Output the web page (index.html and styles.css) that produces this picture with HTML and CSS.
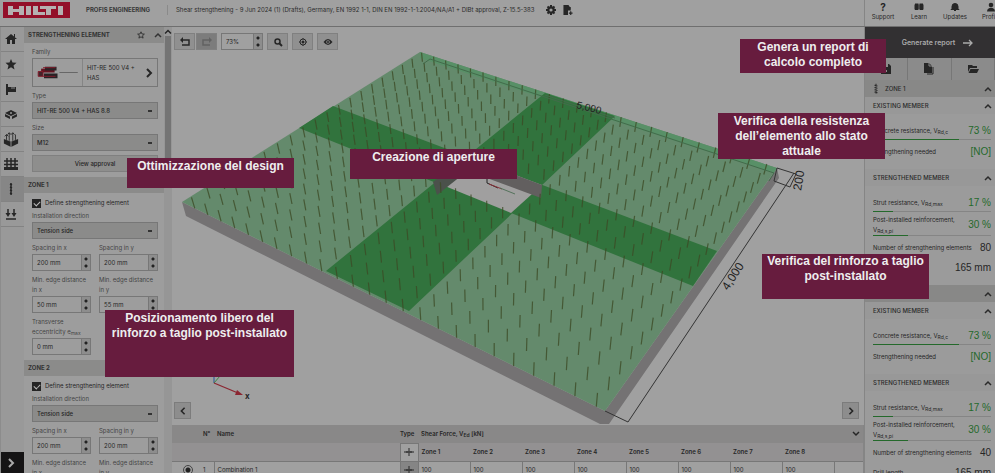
FILE: index.html
```html
<!DOCTYPE html>
<html lang="it">
<head>
<meta charset="utf-8">
<title>PROFIS Engineering</title>
<link rel="stylesheet" href="styles.css">
</head>
<body>
<svg class="defs" aria-hidden="true">
  <symbol id="up" viewBox="0 0 8 6"><path d="M1 5l3-3 3 3" fill="none" stroke="currentColor" stroke-width="1.5"/></symbol>
  <symbol id="right" viewBox="0 0 8 10"><path d="M2 1l4 4-4 4" fill="none" stroke="currentColor" stroke-width="2"/></symbol>
  <symbol id="rod" viewBox="0 0 8 14"><path d="M4 0v13M2 2l4 1M2 5l4 1M2 8l4 1M2 11l4 1" fill="none" stroke="currentColor" stroke-width="1.4"/></symbol>
  <symbol id="cross" viewBox="0 0 10 10"><path d="M0 5h10M5 1v8M3 4v2M7 4v2" fill="none" stroke="currentColor"/></symbol>
</svg>
<header class="top">
  <a class="logo" href="#" aria-label="Hilti"><svg viewBox="0 0 67 16"><g fill="#b5b0b1"><path d="M5 4h5v3h6V4h5v9h-5v-3h-6v3H5zM23 4h5v9h-5zM30 4h5v6h7v3H30zM37 4h16v3h-5v6h-5V7h-6zM55 4h5v9h-5z"/></g></svg></a>
  <span class="product">PROFIS ENGINEERING</span>
  <span class="project">Shear strengthening - 9 Jun 2024 (1) (Drafts), Germany, EN 1992 1-1, DIN EN 1992-1-1:2004/NA/A1 + DIBt approval, Z-15.5-383</span>
  <button class="plain" aria-label="Settings"><svg class="i10" viewBox="0 0 10 10"><circle cx="5" cy="5" r="2.7" fill="none" stroke="currentColor" stroke-width="2.2"/><path d="M5 0v2M5 8v2M0 5h2M8 5h2M1.500 1.500l1.300 1.300M7.200 7.200l1.300 1.300M8.500 1.500L7.200 2.800M2.800 7.200L1.500 8.500" stroke="currentColor" stroke-width="2"/></svg></button>
  <button class="plain" aria-label="Export"><svg class="i10" viewBox="0 0 10 11"><path d="M0 0h5l3 3v3H5v5H0z" fill="currentColor"/><path d="M5 0v3h3M6 9h4M8 7v4" stroke="currentColor" stroke-width="1.300" fill="none"/></svg></button>
  <nav class="links">
    <a href="#"><b class="q">?</b>Support</a>
    <a href="#"><svg viewBox="0 0 10 9"><path d="M1 1h3.500v6H1zM5.500 1H9v6H5.500z"/><path d="M1 2h3v5H1zM6 2h3v5H6z" stroke="currentColor"/></svg>Learn</a>
    <a href="#"><svg viewBox="0 0 10 9"><path d="M2 6V4a3 3 0 0 1 6 0v2l1 1H1zM4 8h2" fill="currentColor" stroke="currentColor"/></svg>Updates</a>
    <a href="#"><svg viewBox="0 0 10 9"><circle cx="5" cy="2.500" r="2.300"/><path d="M1 9c0-5 8-5 8 0z"/></svg>Profile</a>
  </nav>
</header>
<div class="app">
  <nav class="rail" aria-label="Sections">
    <button aria-label="Home"><svg viewBox="0 0 16 16"><path d="M8 3l6 5h-2v5H9V9H7v4H4V8H2z"/><path d="M11 3h1v3h-1z"/></svg></button>
    <button aria-label="Favourites"><svg viewBox="0 0 16 16"><path d="M8 3l1.500 3.500 4 .300-3 2.600 1 4L8 11.200 4.500 13.400l1-4-3-2.600 4-.300z"/></svg></button>
    <button aria-label="Loads"><svg viewBox="0 0 16 16"><path d="M3 3h2v11H3zM5 6h8v5H5z"/><path d="M9 6v2M11 6v2" stroke="#888" /></svg></button>
    <button aria-label="Material"><svg viewBox="0 0 16 16"><path d="M8 4l6 3-6 3-6-3zM2 8l5 2.500V13L2 10.500zM14 8L9 10.500V13l5-2.500z"/><circle cx="8" cy="7" r="1" fill="#999"/></svg></button>
    <button aria-label="Reinforcement"><svg viewBox="0 0 18 18"><path d="M1 9l8 3 8-3v5l-8 4-8-4z"/><path d="M4 10V4M7 11V2M11 11V2M14 10V4M2 6l2-2 2 2M9 4l2-2 2 2M5 4l2-2 2 2" fill="none" stroke="currentColor"/><path d="M9 12v6" stroke="#999"/></svg></button>
    <button aria-label="Mesh"><svg viewBox="0 0 16 16"><path d="M1 5h14M1 8.500h14M4 2v10M8 2v10M12 2v10" fill="none" stroke="currentColor" stroke-width="1.500"/><path d="M1 11h14v3H1z"/></svg></button>
    <button class="on" aria-label="Strengthening"><svg viewBox="0 0 16 16"><path d="M8 2v12M7 3l2 1M7 6l2 1M7 9l2 1M7 12l2 1" fill="none" stroke="currentColor" stroke-width="1.500"/></svg></button>
    <button aria-label="Actions"><svg viewBox="0 0 16 16"><path d="M5 3v6M11 3v6M3 13h10" fill="none" stroke="currentColor" stroke-width="1.500"/><path d="M2.500 7h5L5 11zM8.500 7h5L11 11z"/></svg></button>
    <button class="expand" aria-label="Expand"><svg viewBox="0 0 8 10"><use href="#right"/></svg></button>
  </nav>
  <aside class="side">
    <section>
      <h2>STRENGTHENING ELEMENT <span class="tools"><svg class="i8" viewBox="0 0 10 10"><path d="M5 1l1.200 2.700 3 .200-2.300 2 .700 3L5 7.300 2.400 8.900l.700-3-2.300-2 3-.200z" fill="none" stroke="currentColor" stroke-width="1.200"/></svg><svg class="i8"><use href="#up"/></svg></span></h2>
      <div class="fields">
        <div class="field"><span>Family</span>
          <button class="family"><svg class="pic" viewBox="0 0 50 28"><path d="M8 10h14v4H8z" fill="#651522"/><path d="M12 8h12v4H12zM11 15h14v5H11z" fill="#292326"/><path d="M5 13h5v5H5zM10 9h13M10 18h13" fill="#44242a" stroke="#841c2c"/><path d="M27 14h19" stroke="#656565"/></svg><span>HIT-RE 500 V4 +<br>HAS</span><svg class="i10"><use href="#right"/></svg></button>
        </div>
        <div class="field"><label for="type">Type</label><select id="type"><option>HIT-RE 500 V4 + HAS 8.8</option></select></div>
        <div class="field"><label for="size">Size</label><select id="size"><option>M12</option></select></div>
        <button class="approval">View approval</button>
      </div>
    </section>
    <section>
      <h2>ZONE 1</h2>
      <div class="fields zone">
        <label class="check"><input type="checkbox" checked>Define strengthening element</label>
        <div class="field"><label for="d1">Installation direction</label><select id="d1"><option>Tension side</option></select></div>
        <div class="field half"><label for="x1">Spacing in x</label><div class="num"><input id="x1" value="200 mm"><i></i></div></div>
        <div class="field half"><label for="y1">Spacing in y</label><div class="num"><input id="y1" value="200 mm"><i></i></div></div>
        <div class="field half"><label for="ex1">Min. edge distance<br>in x</label><div class="num"><input id="ex1" value="50 mm"><i></i></div></div>
        <div class="field half"><label for="ey1">Min. edge distance<br>in y</label><div class="num"><input id="ey1" value="55 mm"><i></i></div></div>
        <div class="field half"><label for="t1">Transverse<br>eccentricity e<sub>max</sub></label><div class="num"><input id="t1" value="0 mm"><i></i></div></div>
      </div>
    </section>
    <section>
      <h2>ZONE 2</h2>
      <div class="fields zone">
        <label class="check"><input type="checkbox" checked>Define strengthening element</label>
        <div class="field"><label for="d2">Installation direction</label><select id="d2"><option>Tension side</option></select></div>
        <div class="field half"><label for="x2">Spacing in x</label><div class="num"><input id="x2" value="200 mm"><i></i></div></div>
        <div class="field half"><label for="y2">Spacing in y</label><div class="num"><input id="y2" value="200 mm"><i></i></div></div>
        <div class="field half"><label for="ex2">Min. edge distance<br>in x</label><div class="num"><input id="ex2" value="50 mm"><i></i></div></div>
        <div class="field half"><label for="ey2">Min. edge distance<br>in y</label><div class="num"><input id="ey2" value="55 mm"><i></i></div></div>
      </div>
    </section>
  </aside>
  <div class="scroll"><svg viewBox="0 0 8 6"><use href="#up"/></svg><i></i></div>
  <main>
    <div class="stage">
      <svg class="model" viewBox="172 27 692 398" role="img" aria-label="Slab model">
        <path d="M182 202L186 216 600 424 609 424 779 178 777 168 605 411z" fill="#747273"/>
        <path d="M420 52L777 168 605 411 182 202z" fill="#648a6c"/>
        <path d="M420 52L777 168 774 173 420 58z" fill="#589067"/>
        <path d="M333 106L717 251 693 286 299 128zM545 93L615 116 409 311 326 271z" fill="#31733d"/>
        <path d="M435 182L467 157 542 185 511 213z" fill="#a09f9f"/>
        <path d="M467 157L542 185 541 198 457 167z" fill="#625f5f"/>
        <path d="M433 182L467 157 461 176 437 195z" fill="#4b514b"/>
        <path d="M487 179v4l11 5" fill="none" stroke="#252525"/><path d="M489 184l13 5" stroke="#8a3038"/><path d="M500 188l15 6" stroke="#54725b"/>
        <path id="bars" fill="none" stroke="#3c4a25" stroke-width="1.200" opacity=".78"/>
        <path d="M423 64l7-5 344 114-5 8M545 95l70 23" fill="none" stroke="#436b4b"/>
        <text class="dim far" transform="translate(576 108) rotate(14)">5,000</text>
        <g fill="none" stroke="#333" stroke-width="1"><path d="M605 411l23 11L794 173M777 168l19 6-6 13-16-6M777 168l-3 13"/></g>
        <text class="dim" transform="translate(801 191) rotate(-80)">200</text>
        <text class="dim" transform="translate(728 291) rotate(-57)">4,000</text>
        <path d="M214 383V372" stroke="#26529a"/><path d="M214 383l6-7" stroke="#378846"/><path d="M214 383l24 10" stroke="#8b2631" stroke-width="1.300"/><path d="M237 390l6 5-8 0z" fill="#8b2631"/>
        <text class="axis" x="245" y="399">x</text>
      </svg>
      <div class="toolbar">
        <button aria-label="Undo"><svg class="i10" viewBox="0 0 10 10"><path d="M3 0v6L0 3z" fill="currentColor"/><path d="M2 3h7v5H2" fill="none" stroke="currentColor" stroke-width="1.500"/></svg></button>
        <button class="off" aria-label="Redo" disabled><svg class="i10" viewBox="0 0 10 10"><path d="M7 0v6l3-3z" fill="currentColor"/><path d="M8 3H1v5h7" fill="none" stroke="currentColor" stroke-width="1.500"/></svg></button>
        <div class="num zoom"><input aria-label="Zoom" value="73%"><i></i></div>
        <button aria-label="Search"><svg class="i10" viewBox="0 0 10 10"><circle cx="4.500" cy="4.500" r="2.500" fill="none" stroke="currentColor" stroke-width="1.500"/><path d="M6 6l3 3" stroke="currentColor" stroke-width="2"/></svg></button>
        <button aria-label="Center"><svg class="i10" viewBox="0 0 10 10"><circle cx="5" cy="5" r="3" fill="none" stroke="currentColor"/><circle cx="5" cy="5" r="1.500"/><path d="M5 1v1M5 8v1M1 5h1M8 5h1" stroke="currentColor"/></svg></button>
        <button aria-label="View"><svg class="i10" viewBox="0 0 10 10"><path d="M0.500 5Q5 -1 9.500 5 5 11 .500 5z"/><circle cx="5" cy="5" r="1.800" fill="#909090"/><circle cx="5" cy="5" r="1"/></svg></button>
      </div>
      <div class="pager"><button aria-label="Previous"><svg class="i8 flip"><use href="#right"/></svg></button><button aria-label="Next"><svg class="i8"><use href="#right"/></svg></button></div>
    </div>
    <div class="grid">
    <table>
      <colgroup><col class="c-radio"><col class="c-no"><col class="c-name"><col class="c-type"><col class="c-z"><col class="c-z"><col class="c-z"><col class="c-z"><col class="c-z"><col class="c-z"><col class="c-z"><col class="c-z"><col class="c-end"></colgroup>
      <thead>
        <tr><th></th><th class="no">N°</th><th>Name</th><th class="type">Type</th><th colspan="8">Shear Force, V<sub>Ed</sub> [kN]</th><th class="fold"><svg class="i8 down"><use href="#up"/></svg></th></tr>
        <tr class="zones"><th></th><th></th><th></th><th class="sym"><svg class="i10"><use href="#cross"/></svg></th><th>Zone 1</th><th>Zone 2</th><th>Zone 3</th><th>Zone 4</th><th>Zone 5</th><th>Zone 6</th><th>Zone 7</th><th>Zone 8</th><th></th></tr>
      </thead>
      <tbody>
        <tr><td class="pick"><input type="radio" checked aria-label="Combination 1"></td><td class="no">1</td><td>Combination 1</td><td class="sym"><svg class="i10"><use href="#cross"/></svg></td><td>100</td><td>100</td><td>100</td><td>100</td><td>100</td><td>100</td><td>100</td><td>100</td><td></td></tr>
      </tbody>
    </table>
    </div>
  </main>
  <aside class="results">
    <button class="report">Generate report <svg viewBox="0 0 10 8"><path d="M0 4h9M6 1l3 3-3 3" fill="none" stroke="currentColor" stroke-width="1.300"/></svg></button>
    <div class="files">
      <button aria-label="Save"><svg viewBox="0 0 12 12"><path d="M1 1h8l2 2v8H1z"/><path d="M3 1h5v3H3zM5 7h2v2H5z" fill="#8c8c8c"/></svg></button>
      <button aria-label="Copy"><svg viewBox="0 0 12 12"><path d="M1 0h5l3 3v7H1z"/><path d="M10 4v7H4" fill="none" stroke="currentColor"/><path d="M6 0v3h3" fill="none" stroke="#888"/></svg></button>
      <button aria-label="Open"><svg viewBox="0 0 12 12"><path d="M1 2h4l1 1h4v2H3l-2 4z"/><path d="M3.500 6H12l-2 4H1.500z"/></svg></button>
    </div>
    <section>
      <h2><svg class="rod"><use href="#rod"/></svg>ZONE 1<svg class="i8"><use href="#up"/></svg></h2>
      <h3>EXISTING MEMBER<svg class="i8"><use href="#up"/></svg></h3>
      <div class="rows">
        <p class="bar"><span>Concrete resistance, V<sub>Rd,c</sub></span><b class="ok">73 %</b><i style="width:73%"></i></p>
        <p><span>Strengthening needed</span><b class="ok">[NO]</b></p>
      </div>
      <h3>STRENGTHENED MEMBER<svg class="i8"><use href="#up"/></svg></h3>
      <div class="rows">
        <p class="bar"><span>Strut resistance, V<sub>Rd,max</sub></span><b class="ok">17 %</b><i style="width:17%"></i></p>
        <p class="bar"><span>Post-installed reinforcement,<br>V<sub>Rd,s,pi</sub></span><b class="ok">30 %</b><i style="width:30%"></i></p>
        <p><span>Number of strengthening elements</span><b>80</b></p>
        <p><span>Drill length</span><b>165 mm</b></p>
      </div>
    </section>
    <section>
      <h2><svg class="rod"><use href="#rod"/></svg>ZONE 2<svg class="i8"><use href="#up"/></svg></h2>
      <h3>EXISTING MEMBER<svg class="i8"><use href="#up"/></svg></h3>
      <div class="rows">
        <p class="bar"><span>Concrete resistance, V<sub>Rd,c</sub></span><b class="ok">73 %</b><i style="width:73%"></i></p>
        <p><span>Strengthening needed</span><b class="ok">[NO]</b></p>
      </div>
      <h3>STRENGTHENED MEMBER<svg class="i8"><use href="#up"/></svg></h3>
      <div class="rows">
        <p class="bar"><span>Strut resistance, V<sub>Rd,max</sub></span><b class="ok">17 %</b><i style="width:17%"></i></p>
        <p class="bar"><span>Post-installed reinforcement,<br>V<sub>Rd,s,pi</sub></span><b class="ok">30 %</b><i style="width:30%"></i></p>
        <p><span>Number of strengthening elements</span><b>40</b></p>
        <p><span>Drill length</span><b>165 mm</b></p>
      </div>
    </section>
  </aside>
</div>
<div class="note n-report">Genera un report di calcolo completo</div>
<div class="note n-state">Verifica della resistenza dell’elemento allo stato attuale</div>
<div class="note n-shear">Verifica del rinforzo a taglio post-installato</div>
<div class="note n-open">Creazione di aperture</div>
<div class="note n-design">Ottimizzazione del design</div>
<div class="note n-place">Posizionamento libero del rinforzo a taglio post-installato</div>
<script src="model.js"></script>
</body>
</html>
```
FILE: styles.css
```css
* { box-sizing: border-box; }
body { margin: 0; height: 100vh; overflow: hidden; position: relative; display: flex; flex-direction: column; background: #a0a0a0; color: #262626; font: 6px/10px Inter, "Liberation Sans", sans-serif; }
button, input, select { font: inherit; color: inherit; margin: 0; padding: 0; border: 0; background: none; border-radius: 0; }
button { display: flex; align-items: center; justify-content: center; }
a { color: inherit; text-decoration: none; }
svg { display: block; fill: currentColor; flex: none; }
sub { font-size: 5px; line-height: 0; vertical-align: -1px; }
h2, h3, p { margin: 0; font-size: 6px; font-weight: normal; }
.defs { position: absolute; width: 0; height: 0; }
.i8 { width: 8px; height: 8px; }
.i10 { width: 10px; height: 10px; }

.top { height: 27px; flex: none; display: flex; align-items: center; border-bottom: 1px solid #6f6f6f; padding: 0 0 6px 3px; }
.logo { width: 67px; height: 16px; background: #930f29; margin-right: 16px; }
.product { font-weight: bold; width: 81px; color: #383838; white-space: nowrap; }
.project { border-left: 1px solid #8a8a8a; padding-left: 8px; margin: 0 12px 0 0; white-space: nowrap; color: #2c2c2c; }
.plain { margin-right: 7px; }
.links { margin-left: auto; width: 131px; align-self: stretch; display: flex; border-left: 1px solid #858585; overflow: hidden; margin-bottom: -6px; }
.links a { flex: none; width: 36px; padding-top: 2px; display: flex; flex-direction: column; align-items: center; }
.links svg { width: 10px; height: 10px; }
.q { font-size: 10px; }

.app { flex: 1; min-height: 0; display: flex; }
.rail { width: 24px; flex: none; display: flex; flex-direction: column; border-left: 1px solid #8c8c8c; background: #999; }
.rail button { height: 25px; padding-right: 3px; border-bottom: 1px solid #838383; }
.rail svg { width: 16px; height: 16px; }
.rail .on { background: #868686; }
.rail .expand { margin-top: auto; height: 21px; background: #151415; color: #aaa; border: 0; }
.rail .expand svg { width: 8px; height: 10px; }

.side { width: 140px; flex: none; overflow: hidden; background: #9d9d9d; }
.side h2 { height: 16px; display: flex; align-items: center; padding: 0 2px 0 4px; background: #8b8b8a; font-weight: bold; color: #333; white-space: nowrap; }
.tools { margin-left: auto; display: flex; gap: 9px; }
.fields { padding: 4px 6px 5px 8px; display: flex; flex-wrap: wrap; gap: 4px 8px; }
.zone { padding-top: 5px; }
.field { width: 100%; display: flex; flex-direction: column; gap: 1px; color: #444; }
.half { width: 59px; white-space: nowrap; }
.family { height: 29px; border: 1px solid #777; text-align: left; color: #262626; justify-content: flex-start; }
.family .pic { width: 50px; height: 27px; border-right: 1px solid #858585; }
.family span { flex: 1; padding-left: 4px; white-space: nowrap; }
.family > .i10 { margin-right: 3px; }
select { height: 17px; width: 100%; padding: 0 4px; appearance: none; border: 1px solid #777; background: #8b8b8a linear-gradient(#333, #333) right 5px center / 4px 2px no-repeat; color: #262626; font-weight: 500; }
.approval { width: 100%; height: 17px; border: 1px solid #808080; background: #8e8e8d; font-weight: 500; }
.check { width: 100%; height: 10px; display: flex; align-items: center; gap: 4px; margin-bottom: -1px; }
.check input { appearance: none; width: 9px; height: 9px; background: #242424; display: grid; place-items: center; }
.check input::after { content: ""; width: 5px; height: 3px; border: solid #bbb; border-width: 0 0 1px 1px; transform: rotate(-45deg); }
.num { height: 17px; display: flex; border: 1px solid #777; color: #262626; }
.num input { flex: 1; min-width: 0; padding-left: 4px; }
.num i { width: 9px; border-left: 1px solid #777; background: radial-gradient(circle at 4px 4px, #222 1px, transparent 2px), radial-gradient(circle at 4px 11px, #222 1px, transparent 2px), #8d8d8d; }
.scroll { width: 8px; flex: none; background: #969696; }
.scroll svg { width: 8px; height: 9px; }
.scroll i { display: block; width: 6px; height: 140px; margin: 0 auto; background: #747474; }

main { flex: 1; min-width: 0; display: flex; flex-direction: column; }
.stage { flex: 1; min-height: 0; position: relative; }
.model { width: 100%; height: 100%; }
.dim { font-family: "Liberation Sans", Arial, sans-serif; font-size: 12px; fill: #222; }
.far { font-size: 10px; }
.axis { font-size: 8px; font-weight: bold; }
.toolbar { position: absolute; top: 6px; left: 2px; display: flex; gap: 4px; }
.toolbar button { width: 21px; height: 17px; background: #909090; border: 1px solid #808080; }
.toolbar button:first-child { margin-right: -3px; }
.toolbar .off { background: #7c7c7c; color: #626262; }
.zoom { width: 42px; }
.pager { position: absolute; left: 2px; right: 5px; bottom: 6px; display: flex; justify-content: space-between; }
.pager button { width: 17px; height: 17px; background: #8d8d8d; border: 1px solid #7c7c7c; }
.flip { transform: scaleX(-1); }
.down { transform: scaleY(-1); }
.grid { height: 48px; flex: none; overflow: hidden; border-right: 1px solid #858585; }
table { width: 100%; table-layout: fixed; border-collapse: collapse; }
th, td { height: 18px; padding: 0 0 0 3px; text-align: left; white-space: nowrap; }
th { background: #898888; font-weight: 600; color: #262626; }
.zones th { background: #939192; border-bottom: 1px solid #777; }
.zones .sym { background: #a0a0a0; }
td { border-left: 1px solid #777; }
td:first-child, .no { border-left: 0; }
.c-radio { width: 28px; } .c-no { width: 14px; } .c-name { width: 186px; } .c-type { width: 18px; } .c-z { width: 52px; }
.type { padding: 0; }
.sym { border: 1px solid #777; }
td.sym { background: #858585; }
.pick { padding-left: 11px; }
.pick input { display: block; appearance: none; width: 10px; height: 10px; border: 1px solid #444; border-radius: 50%; background: radial-gradient(#222 2px, transparent 3px); }
.fold .i8 { margin-left: auto; margin-right: 3px; }

.results { width: 131px; flex: none; overflow: hidden; border-left: 1px solid #858585; background: #9b9b9b; }
.report { width: 100%; height: 31px; background: #323032; color: #aaa; gap: 8px; padding-left: 15px; font-size: 7px; font-weight: 600; }
.report svg { width: 10px; height: 8px; }
.files { display: flex; height: 22px; background: #8b8b8b; }
.files button { flex: 1; border-right: 1px solid #777; }
.files svg { width: 12px; height: 12px; }
.results h2, .results h3 { display: flex; align-items: center; color: #2a2a2a; padding: 0 3px 0 8px; font-weight: 500; }
.results h2 { height: 17px; background: #888887; gap: 6px; }
.results h3 { height: 17px; background: #989898; }
.results h2 .i8, .results h3 .i8 { margin-left: auto; }
.rod { width: 6px; height: 12px; }
.rows { padding: 9px 4px 9px 8px; display: flex; flex-direction: column; gap: 3px; }
.rows p { position: relative; min-height: 17px; display: flex; align-items: center; justify-content: space-between; gap: 3px; }
.rows span { white-space: nowrap; }
.rows b { font: 10px/10px "Liberation Sans", Arial, sans-serif; white-space: nowrap; }
.rows .ok { color: #24692b; }
.rows .bar { border-bottom: 1px solid #858585; }
.rows i { position: absolute; left: 0; bottom: -1px; height: 1px; background: #24692b; }

.note { position: absolute; background: #671c3e; color: #eee; font: bold 12px/15px "Liberation Sans", Arial, sans-serif; text-align: center; width: 167px; padding-top: 1px; }
.n-report { right: 109px; top: 39px; width: 146px; height: 34px; padding: 1px 12px 0; }
.n-state { right: 110px; top: 113px; height: 46px; padding: 1px 8px 0; }
.n-shear { right: 66px; top: 254px; height: 45px; padding-top: 0; }
.n-open { left: 350px; top: 149px; height: 30px; }
.n-design { left: 127px; top: 158px; height: 30px; }
.n-place { left: 105px; top: 310px; width: 189px; height: 67px; padding: 1px 4px 0; }
```
FILE: model.js
```js
// Perspective map from the unit square to the top face of the slab.
const [A, B, C, D] = [[420, 52], [777, 168], [605, 411], [182, 202]];
const d1 = [B[0] - C[0], B[1] - C[1]];
const d2 = [D[0] - C[0], D[1] - C[1]];
const s = [A[0] - B[0] + C[0] - D[0], A[1] - B[1] + C[1] - D[1]];
const det = d1[0] * d2[1] - d2[0] * d1[1];
const g = (s[0] * d2[1] - d2[0] * s[1]) / det;
const h = (d1[0] * s[1] - s[0] * d1[1]) / det;
function project(u, v) {
  const w = g * u + h * v + 1;
  return [0, 1].map(k => ((B[k] - A[k] + g * B[k]) * u + (D[k] - A[k] + h * D[k]) * v + A[k]) / w);
}
let path = "";
for (let i = 0; i < 25; i++) {
  for (let j = 0; j < 20; j++) {
    const [x, y] = project((i + 1) / 25.4, (j + 1) / 20);
    // No bars inside the opening.
    if (y > 106 + 0.378 * (x - 333) && y < 136 + 0.401 * (x - 299) && y > 93 + 0.813 * (545 - x) && y < 126 + 0.947 * (615 - x)) continue;
    const len = 8 + y / 70;
    const lean = (x - 490) / 90;
    path += `M${x.toFixed(1)} ${y.toFixed(1)}l${lean.toFixed(1)} ${(-len).toFixed(1)}`;
  }
}
document.getElementById("bars").setAttribute("d", path);
```
